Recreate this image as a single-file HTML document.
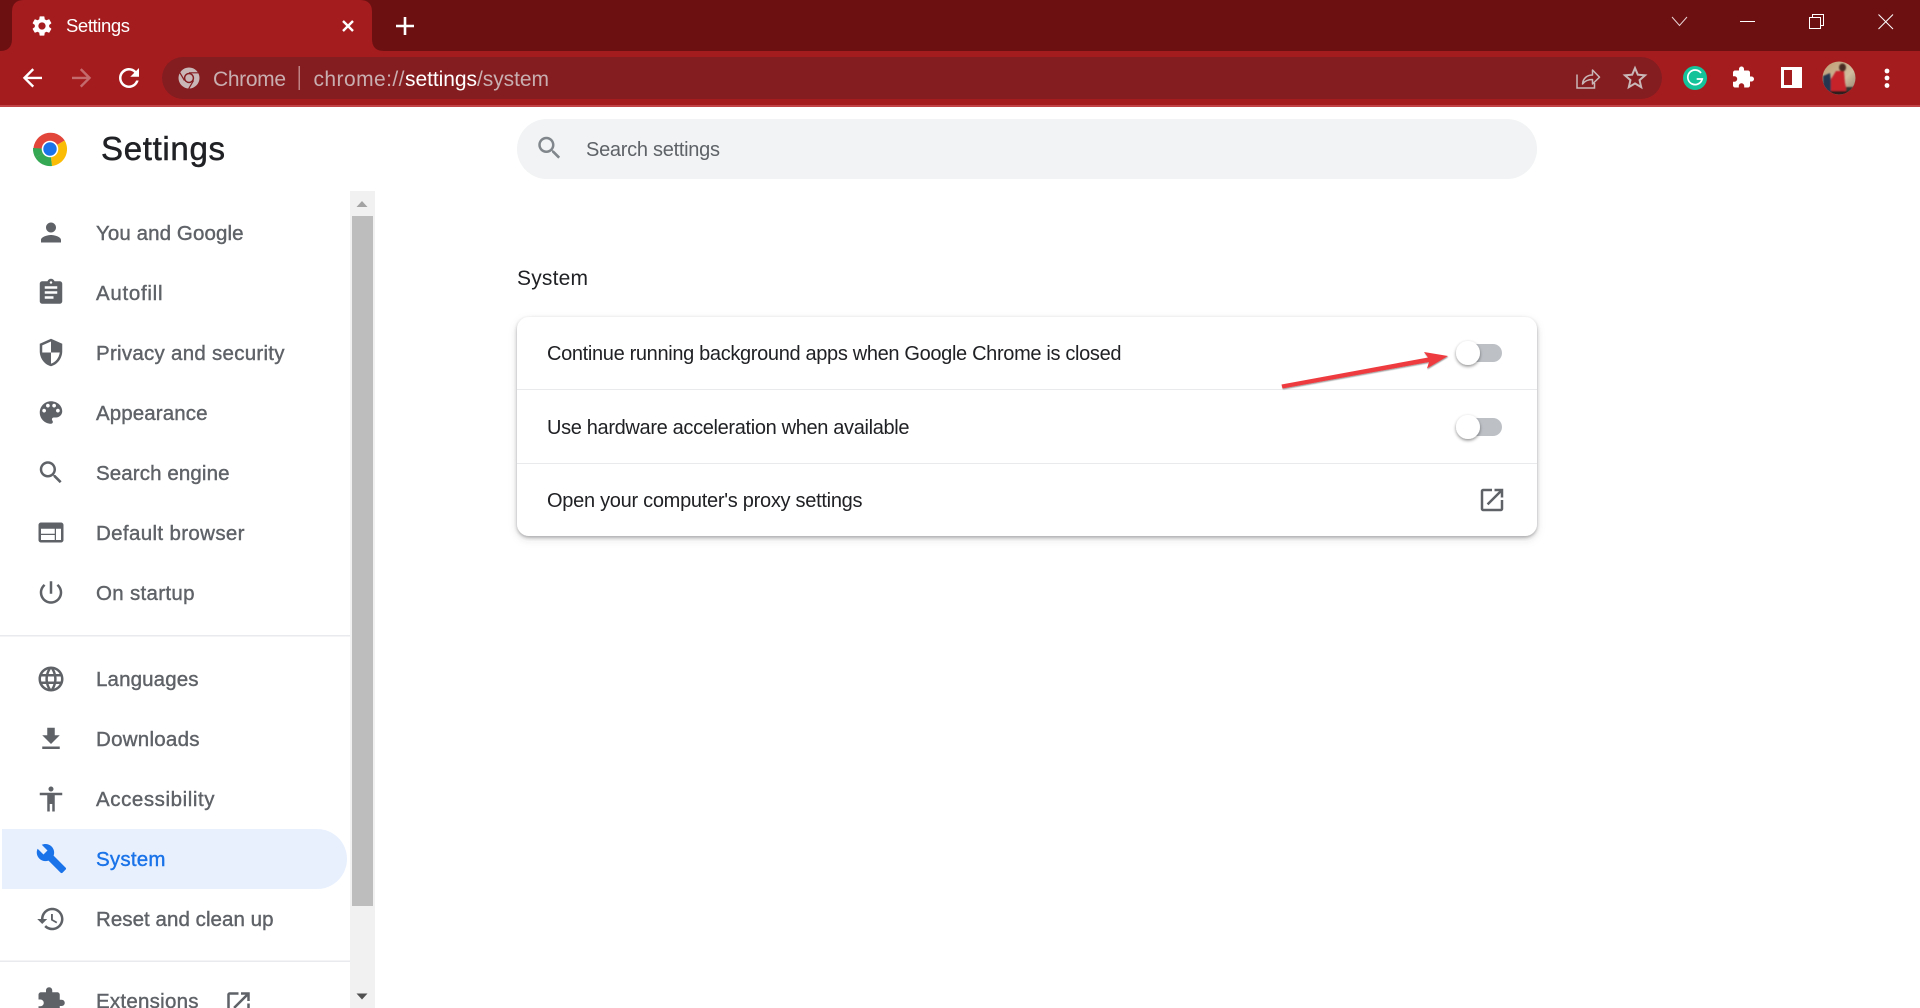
<!DOCTYPE html>
<html lang="en">
<head>
<meta charset="utf-8">
<title>Settings</title>
<style>
html,body{margin:0;padding:0;width:1920px;height:1008px;overflow:hidden;background:#fff}
svg{display:block;position:absolute;left:0;top:0}
text{font-family:"Liberation Sans",Arial,sans-serif;white-space:pre}
.n text{font-size:20.5px;fill:#5f6368;stroke:#5f6368;stroke-width:.4px}
.n path{fill:#5f6368}
.r{font-size:20px;fill:#202124}
</style>
</head>
<body>
<svg width="1920" height="1008" viewBox="0 0 1920 1008" xmlns="http://www.w3.org/2000/svg">
<defs>
<filter id="ks" x="-40%" y="-40%" width="180%" height="180%"><feDropShadow dx="0" dy="1.5" stdDeviation="1.5" flood-color="#000" flood-opacity=".45"/></filter>
<filter id="cs" x="-5%" y="-15%" width="110%" height="130%">
<feDropShadow dx="0" dy="1.5" stdDeviation="1.5" flood-color="#3c4043" flood-opacity=".4"/>
<feDropShadow dx="0" dy="3" stdDeviation="4" flood-color="#3c4043" flood-opacity=".13"/>
</filter>
<filter id="as" x="-5%" y="-30%" width="110%" height="160%"><feDropShadow dx=".5" dy="1" stdDeviation=".5" flood-color="#000" flood-opacity=".4"/></filter>
<filter id="ab" x="-10%" y="-10%" width="120%" height="120%"><feGaussianBlur stdDeviation=".7"/></filter>
<clipPath id="av"><circle cx="1839" cy="78" r="16.5"/></clipPath>
<linearGradient id="ag" x1="0" y1="0" x2="1" y2="1"><stop offset="0" stop-color="#bf9a70"/><stop offset=".6" stop-color="#d0bd9f"/><stop offset="1" stop-color="#8a7a68"/></linearGradient>
</defs>

<!-- Chrome frame -->
<rect x="0" y="0" width="1920" height="51" fill="#6c1012"/>
<rect x="0" y="51" width="1920" height="54" fill="#a51c1f"/>
<rect x="0" y="105" width="1920" height="2" fill="#c14346"/>
<path d="M0 51q12 0 12-12V12Q12 0 24 0H360q12 0 12 12V39q0 12 12 12Z" fill="#a51c1f"/>
<path transform="translate(30 14)" fill="#fff" d="M19.14 12.94c.04-.3.06-.61.06-.94 0-.32-.02-.64-.07-.94l2.03-1.58c.18-.14.23-.41.12-.61l-1.92-3.32c-.12-.22-.37-.29-.59-.22l-2.39.96c-.5-.38-1.03-.7-1.62-.94l-.36-2.54c-.04-.24-.24-.41-.48-.41h-3.84c-.24 0-.43.17-.47.41l-.36 2.54c-.59.24-1.13.57-1.62.94l-2.39-.96c-.22-.08-.47 0-.59.22L2.74 8.87c-.12.21-.08.47.12.61l2.03 1.58c-.05.3-.09.63-.09.94s.02.64.07.94l-2.03 1.58c-.18.14-.23.41-.12.61l1.92 3.32c.12.22.37.29.59.22l2.39-.96c.5.38 1.03.7 1.62.94l.36 2.54c.05.24.24.41.48.41h3.84c.24 0 .44-.17.47-.41l.36-2.54c.59-.24 1.13-.56 1.62-.94l2.39.96c.22.08.47 0 .59-.22l1.92-3.32c.12-.22.07-.47-.12-.61l-2.01-1.58zM12 15.6c-1.98 0-3.6-1.62-3.6-3.6s1.62-3.6 3.6-3.6 3.6 1.62 3.6 3.6-1.62 3.6-3.6 3.6z"/>
<text x="66" y="32" font-size="18.500" fill="#fff" textLength="64">Settings</text>
<path d="M343 21l10 10M353 21l-10 10" stroke="#fff" stroke-width="2.4" fill="none"/>
<path d="M405 17v18M396 26h18" stroke="#fff" stroke-width="2.6" fill="none"/>

<!-- Window controls -->
<path d="M1672 17l7.5 8.5 7.5-8.5" stroke="#e8d4d4" stroke-width="1" fill="none"/>
<path d="M1740 21.5h15" stroke="#fff" stroke-width="1" fill="none"/>
<path d="M1812.500 17v-2.500h11v11h-3" stroke="#fff" stroke-width="1" fill="none"/>
<rect x="1809.500" y="17.500" width="11" height="11" stroke="#fff" stroke-width="1" fill="none"/>
<path d="M1878.500 14.500l14.500 14.500M1893 14.500l-14.500 14.500" stroke="#fff" stroke-width="1" fill="none"/>

<!-- Toolbar -->
<path transform="translate(18 63.500) scale(1.2)" fill="#fff" d="M20 11H7.830l5.590-5.590L12 4l-8 8 8 8 1.410-1.410L7.830 13H20v-2z"/>
<path transform="translate(96 63.500) scale(-1.2 1.2)" fill="#fff" opacity=".35" d="M20 11H7.830l5.590-5.590L12 4l-8 8 8 8 1.410-1.410L7.830 13H20v-2z"/>
<path transform="translate(114 63) scale(1.25)" fill="#fff" d="M17.650 6.350C16.200 4.900 14.210 4 12 4c-4.420 0-7.990 3.580-7.990 8s3.570 8 7.990 8c3.730 0 6.840-2.550 7.730-6h-2.080c-.82 2.330-3.040 4-5.650 4-3.310 0-6-2.690-6-6s2.690-6 6-6c1.660 0 3.140.69 4.220 1.780L13 11h7V4l-2.350 2.350z"/>
<rect x="162" y="57" width="1500" height="42" rx="21" fill="#841d20"/>
<circle cx="189" cy="78" r="10.500" fill="#c9b7b8"/>
<circle cx="189" cy="78" r="5.200" fill="#841d20"/>
<circle cx="189" cy="78" r="3.700" fill="#c9b7b8"/>
<path d="M189 72.800h9.300M184.500 80.600l-4.700-8M193.500 80.600l-4.700 8" stroke="#841d20" stroke-width="1.200" fill="none"/>
<text x="213" y="86" font-size="21" fill="#c9aeb0" textLength="73">Chrome</text>
<rect x="298.500" y="66" width="1.500" height="24" fill="#c08385"/>
<text x="313.500" y="86" font-size="21" fill="#c9aeb0" textLength="91">chrome://</text>
<text x="405" y="86" font-size="21" fill="#fff" textLength="72">settings</text>
<text x="477" y="86" font-size="21" fill="#c9aeb0" textLength="72">/system</text>
<path d="M1577 74.500v13.500h17.500v-5" stroke="#c9b7b8" stroke-width="1.500" fill="none"/>
<path d="M1582.500 84c.5-6 5-9 10-9v-5l7 7.200-7 6.800v-4.500c-4.500 0-7.500 1.200-10 4.500z" stroke="#c9b7b8" stroke-width="1.500" fill="none" stroke-linejoin="round"/>
<path transform="translate(1620 63) scale(1.25)" fill="#c9b7b8" d="M22 9.240l-7.190-.62L12 2 9.190 8.630 2 9.240l5.460 4.730L5.820 21 12 17.270 18.180 21l-1.630-7.030L22 9.240zM12 15.400l-3.760 2.270 1-4.280-3.320-2.880 4.380-.38L12 6.100l1.710 4.040 4.380.38-3.320 2.880 1 4.280L12 15.400z"/>
<circle cx="1695" cy="78" r="12" fill="#15c39a"/>
<path d="M1701 73a7.300 7.300 0 1 0 1.200 6h-5.500" stroke="#fff" stroke-width="1.700" fill="none"/>
<path transform="translate(1731 65.500)" fill="#fff" d="M20.500 11H19V7c0-1.100-.9-2-2-2h-4V3.500C13 2.120 11.880 1 10.500 1S8 2.120 8 3.500V5H4c-1.100 0-1.990.9-1.990 2v3.800H3.500c1.490 0 2.700 1.210 2.700 2.700s-1.210 2.700-2.700 2.700H2V20c0 1.100.9 2 2 2h3.800v-1.500c0-1.490 1.210-2.700 2.700-2.700 1.490 0 2.700 1.210 2.700 2.700V22H17c1.100 0 2-.9 2-2v-4h1.500c1.380 0 2.500-1.120 2.500-2.500S21.880 11 20.500 11z"/>
<rect x="1781" y="67" width="21" height="21" fill="#fff"/>
<rect x="1784" y="70" width="8" height="15" fill="#a51c1f"/>
<g clip-path="url(#av)">
<rect x="1822" y="61" width="34" height="34" fill="url(#ag)"/>
<g filter="url(#ab)">
<path d="M1823 76l7-3 3 22h-10z" fill="#27364f"/>
<path d="M1831 95l0-16 5-8 8 0 1 12 3 12z" fill="#c5202b"/>
<ellipse cx="1842.500" cy="67.500" rx="3.500" ry="4" fill="#4a2a20"/>
<rect x="1846" y="87" width="10" height="8" fill="#37332e"/>
<rect x="1830" y="91" width="18" height="4" fill="#2a1a1a"/>
</g>
</g>
<circle cx="1887" cy="71" r="2.400" fill="#fff"/>
<circle cx="1887" cy="78" r="2.400" fill="#fff"/>
<circle cx="1887" cy="85.500" r="2.400" fill="#fff"/>

<!-- Header -->
<path d="M50 149L64.700 140.500A17 17 0 0 0 35.300 157.500Z" fill="#e2453a"/>
<path d="M50 149L64.700 140.500A17 17 0 0 1 52 166Z" fill="#fbbc05"/>
<path d="M50 149L52 166A17 17 0 0 1 35.300 157.500Z" fill="#34a853"/>
<path d="M50 149L33 148A17 17 0 0 0 35.300 157.500Z" fill="#34a853"/>
<circle cx="50" cy="149" r="8.300" fill="#fff"/>
<circle cx="50" cy="149" r="6.700" fill="#1a73e8"/>
<text x="101" y="160" font-size="33" fill="#202124" stroke="#202124" stroke-width=".5" textLength="124">Settings</text>

<rect x="517" y="119" width="1020" height="60" rx="30" fill="#f1f3f4"/>
<path transform="translate(534.500 133) scale(1.25)" fill="#80868b" d="M15.500 14h-.79l-.28-.27C15.410 12.590 16 11.110 16 9.500 16 5.910 13.090 3 9.500 3S3 5.910 3 9.500 5.910 16 9.500 16c1.610 0 3.090-.59 4.230-1.570l.27.28v.79l5 4.990L20.490 19l-4.990-5zm-6 0C7.010 14 5 11.990 5 9.500S7.010 5 9.500 5 14 7.010 14 9.500 11.990 14 9.500 14z"/>
<text x="586" y="156" font-size="20" fill="#5f6368" textLength="134">Search settings</text>

<!-- Sidebar -->
<rect x="2" y="829" width="345" height="60" rx="0" fill="none"/>
<path d="M2 829H317a30 30 0 0 1 0 60H2z" fill="#e8f0fe"/>
<rect x="0" y="635" width="350" height="1.500" fill="#e8eaed"/>
<rect x="0" y="960.500" width="350" height="1.500" fill="#e8eaed"/>

<g class="n">
<path transform="translate(36 217.500) scale(1.25)" d="M12 12c2.210 0 4-1.790 4-4s-1.790-4-4-4-4 1.790-4 4 1.790 4 4 4zm0 2c-2.670 0-8 1.340-8 4v2h16v-2c0-2.660-5.330-4-8-4z"/>
<text x="96" y="240" textLength="147.500">You and Google</text>
<path transform="translate(36 277.500) scale(1.25)" d="M19 3h-4.180C14.400 1.840 13.300 1 12 1c-1.300 0-2.400.84-2.820 2H5c-1.100 0-2 .9-2 2v14c0 1.100.9 2 2 2h14c1.100 0 2-.9 2-2V5c0-1.100-.9-2-2-2zm-7 0c.55 0 1 .45 1 1s-.45 1-1 1-1-.45-1-1 .45-1 1-1zm2 14H7v-2h7v2zm3-4H7v-2h10v2zm0-4H7V7h10v2z"/>
<text x="96" y="300" textLength="66.500">Autofill</text>
<path transform="translate(36 337.500) scale(1.25)" d="M12 1L3 5v6c0 5.550 3.840 10.740 9 12 5.160-1.260 9-6.450 9-12V5l-9-4zm0 10.990h7c-.53 4.120-3.280 7.790-7 8.940V12H5V6.300l7-3.110v8.800z"/>
<text x="96" y="360" textLength="188.500">Privacy and security</text>
<path transform="translate(36 397.500) scale(1.25)" d="M12 3c-4.970 0-9 4.030-9 9s4.030 9 9 9c.83 0 1.500-.67 1.500-1.500 0-.39-.15-.74-.39-1.010-.23-.26-.38-.61-.38-.99 0-.83.67-1.500 1.500-1.500H16c2.760 0 5-2.240 5-5 0-4.420-4.030-8-9-8zm-5.500 9c-.83 0-1.500-.67-1.500-1.500S5.670 9 6.500 9 8 9.670 8 10.500 7.330 12 6.500 12zm3-4C8.670 8 8 7.330 8 6.500S8.670 5 9.500 5s1.500.67 1.500 1.500S10.330 8 9.500 8zm5 0c-.83 0-1.500-.67-1.500-1.500S13.670 5 14.500 5s1.500.67 1.500 1.500S15.330 8 14.500 8zm3 4c-.83 0-1.500-.67-1.500-1.500S16.670 9 17.500 9s1.500.67 1.500 1.500-.67 1.500-1.500 1.500z"/>
<text x="96" y="420" textLength="111.500">Appearance</text>
<path transform="translate(36 457.500) scale(1.25)" d="M15.500 14h-.79l-.28-.27C15.410 12.590 16 11.110 16 9.500 16 5.910 13.090 3 9.500 3S3 5.910 3 9.500 5.910 16 9.500 16c1.610 0 3.090-.59 4.230-1.570l.27.28v.79l5 4.990L20.490 19l-4.990-5zm-6 0C7.010 14 5 11.990 5 9.500S7.010 5 9.500 5 14 7.010 14 9.500 11.990 14 9.500 14z"/>
<text x="96" y="480" textLength="133.500">Search engine</text>
<path transform="translate(36 517.500) scale(1.25)" d="M20 4H4c-1.100 0-1.990.9-1.990 2L2 18c0 1.100.9 2 2 2h16c1.100 0 2-.9 2-2V6c0-1.100-.9-2-2-2zm-5 14H4v-4h11v4zm0-5H4V9h11v4zm5 5h-4V9h4v9z"/>
<text x="96" y="540" textLength="148.500">Default browser</text>
<path transform="translate(36 577.500) scale(1.25)" d="M13 3h-2v10h2V3zm4.830 2.170l-1.420 1.420C17.990 7.860 19 9.810 19 12c0 3.870-3.130 7-7 7s-7-3.130-7-7c0-2.190 1.010-4.140 2.580-5.420L6.170 5.170C4.230 6.820 3 9.260 3 12c0 4.970 4.030 9 9 9s9-4.030 9-9c0-2.740-1.230-5.180-3.170-6.830z"/>
<text x="96" y="600" textLength="98.500">On startup</text>
<path transform="translate(36 664) scale(1.25)" d="M11.990 2C6.470 2 2 6.480 2 12s4.470 10 9.990 10C17.520 22 22 17.520 22 12S17.520 2 11.990 2zm6.930 6h-2.950c-.32-1.250-.78-2.450-1.380-3.560 1.840.63 3.370 1.910 4.330 3.560zM12 4.040c.83 1.200 1.480 2.530 1.910 3.960h-3.820c.43-1.430 1.080-2.760 1.910-3.960zM4.260 14C4.100 13.360 4 12.690 4 12s.1-1.360.26-2h3.380c-.08.66-.14 1.320-.14 2 0 .68.06 1.340.14 2H4.260zm.82 2h2.950c.32 1.250.78 2.450 1.380 3.560-1.840-.63-3.370-1.900-4.330-3.560zm2.950-8H5.080c.96-1.660 2.490-2.930 4.330-3.560C8.810 5.550 8.350 6.750 8.030 8zM12 19.960c-.83-1.200-1.480-2.530-1.910-3.960h3.820c-.43 1.430-1.080 2.760-1.910 3.960zM14.340 14H9.660c-.09-.66-.16-1.320-.16-2 0-.68.07-1.350.16-2h4.680c.09.65.16 1.320.16 2 0 .68-.07 1.340-.16 2zm.25 5.560c.6-1.110 1.060-2.310 1.380-3.560h2.950c-.96 1.650-2.490 2.930-4.330 3.560zM16.360 14c.08-.66.14-1.320.14-2 0-.68-.06-1.340-.14-2h3.380c.16.64.26 1.310.26 2s-.1 1.360-.26 2h-3.380z"/>
<text x="96" y="686" textLength="102.500">Languages</text>
<path transform="translate(36 724) scale(1.25)" d="M19 9h-4V3H9v6H5l7 7 7-7zM5 18v2h14v-2H5z"/>
<text x="96" y="746" textLength="103.500">Downloads</text>
<path transform="translate(36 784) scale(1.25)" d="M12 2c1.100 0 2 .9 2 2s-.9 2-2 2-2-.9-2-2 .9-2 2-2zm9 7h-6v13h-2v-6h-2v6H9V9H3V7h18v2z"/>
<text x="96" y="806" textLength="118.500">Accessibility</text>
<path transform="translate(36 904) scale(1.25)" d="M13 3c-4.970 0-9 4.030-9 9H1l3.890 3.890.07.14L9 12H6c0-3.870 3.130-7 7-7s7 3.130 7 7-3.130 7-7 7c-1.930 0-3.680-.79-4.940-2.060l-1.420 1.420C8.270 19.990 10.510 21 13 21c4.970 0 9-4.030 9-9s-4.030-9-9-9zm-1 5v5l4.280 2.540.72-1.210-3.500-2.080V8H12z"/>
<text x="96" y="926" textLength="177.500">Reset and clean up</text>
<path transform="translate(36 986) scale(1.25)" d="M20.500 11H19V7c0-1.100-.9-2-2-2h-4V3.500C13 2.120 11.880 1 10.500 1S8 2.120 8 3.500V5H4c-1.100 0-1.990.9-1.990 2v3.800H3.500c1.490 0 2.700 1.210 2.700 2.700s-1.210 2.700-2.700 2.700H2V20c0 1.100.9 2 2 2h3.800v-1.500c0-1.490 1.210-2.700 2.700-2.700 1.490 0 2.700 1.210 2.700 2.700V22H17c1.100 0 2-.9 2-2v-4h1.500c1.380 0 2.500-1.120 2.500-2.500S21.880 11 20.500 11z"/>
<text x="96" y="1008" textLength="102.500">Extensions</text>
<path transform="translate(223.500 988.500) scale(1.25)" d="M19 19H5V5h7V3H5c-1.110 0-2 .9-2 2v14c0 1.100.89 2 2 2h14c1.100 0 2-.9 2-2v-7h-2v7zM14 3v2h3.590l-9.830 9.830 1.410 1.410L19 6.410V10h2V3h-7z"/>
</g>
<path transform="translate(35.500 842.500) scale(1.33)" fill="#1a73e8" d="M22.700 19l-9.100-9.100c.9-2.300.4-5-1.500-6.900-2-2-5-2.400-7.400-1.300L9 6 6 9 1.600 4.700C.4 7.100.9 10.100 2.900 12.100c1.900 1.900 4.600 2.400 6.900 1.500l9.100 9.100c.4.400 1 .4 1.400 0l2.300-2.300c.5-.4.500-1.100.1-1.400z"/>
<text x="96" y="866" font-size="20.500" fill="#1a73e8" stroke="#1a73e8" stroke-width=".4" textLength="69.500">System</text>

<!-- Scrollbar -->
<rect x="350" y="191" width="25" height="817" fill="#f1f1f1"/>
<rect x="352" y="216" width="21" height="690" fill="#bdbdbd"/>
<path d="M356.500 207l5.500-6 5.500 6z" fill="#a3a3a3"/>
<path d="M356.500 993.500l5.500 6 5.500-6z" fill="#505050"/>

<!-- Content -->
<text x="517" y="285" font-size="21" fill="#202124" textLength="71">System</text>
<rect x="517" y="317" width="1020" height="219" rx="12" fill="#fff" filter="url(#cs)"/>
<rect x="517" y="389" width="1020" height="1" fill="#e9eaec"/>
<rect x="517" y="463" width="1020" height="1" fill="#e9eaec"/>
<text x="547" y="360" class="r" textLength="574.500">Continue running background apps when Google Chrome is closed</text>
<text x="547" y="434" class="r" textLength="362.500">Use hardware acceleration when available</text>
<text x="547" y="507" class="r" textLength="315.500">Open your computer's proxy settings</text>

<rect x="1460" y="344" width="42" height="18" rx="9" fill="#bdc1c6"/>
<circle cx="1468" cy="353" r="12" fill="#fff" filter="url(#ks)"/>
<rect x="1460" y="418" width="42" height="18" rx="9" fill="#bdc1c6"/>
<circle cx="1468" cy="427" r="12" fill="#fff" filter="url(#ks)"/>
<path transform="translate(1477 485) scale(1.25)" fill="#5f6368" d="M19 19H5V5h7V3H5c-1.110 0-2 .9-2 2v14c0 1.100.89 2 2 2h14c1.100 0 2-.9 2-2v-7h-2v7zM14 3v2h3.590l-9.830 9.830 1.410 1.410L19 6.410V10h2V3h-7z"/>

<!-- Annotation arrow -->
<path d="M1281.500 384.500L1428 357.500 1424 352 1448 356 1427 368.500 1429 362 1282.500 388.500Z" fill="#ee3b3f" filter="url(#as)"/>
</svg>
</body>
</html>
